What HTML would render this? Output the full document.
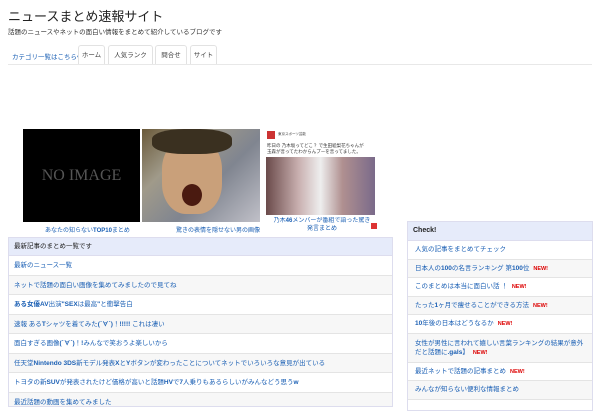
<!DOCTYPE html>
<html><head><meta charset="utf-8"><style>
*{margin:0;padding:0;box-sizing:border-box}
body{width:600px;height:400px;overflow:hidden;background:#fff;font-family:"Liberation Sans","Noto Sans CJK JP",sans-serif;position:relative;color:#333}
.a{position:absolute;white-space:nowrap}
a,.l{color:#1a5fb4;text-decoration:none}
.tab{position:absolute;top:45px;height:20px;border:1px solid #e2e2e2;border-bottom:none;border-radius:3px 3px 0 0;font-size:6.5px;line-height:19px;text-align:center;color:#444;background:#fff;white-space:nowrap;overflow:hidden}
.box{position:absolute;border:1px solid #dde;background:#fff;overflow:hidden}
.hd{background:#e6ebfa;font-size:7px;font-weight:bold;padding-left:5px;border-bottom:1px solid #dde;color:#222}
.r{font-size:6.5px;border-bottom:1px solid #e4e4e4;padding-left:5px;color:#1a5fb4;white-space:nowrap;overflow:hidden}
.n{color:#d00;font-weight:bold;font-size:5.5px;margin-left:4px}
b{font-weight:bold}
</style></head><body>
<div class="a" style="left:8px;top:6px;font-size:13px;color:#222">ニュースまとめ速報サイト</div>
<div class="a" style="left:8px;top:26px;font-size:6.5px;color:#333">話題のニュースやネットの面白い情報をまとめて紹介しているブログです</div>
<div class="a" style="left:12px;top:51px;font-size:6.5px;color:#1a5fb4">カテゴリ一覧はこちら▾</div>
<div class="tab" style="left:78px;width:27px">ホーム</div>
<div class="tab" style="left:108px;width:45px">人気ランク</div>
<div class="tab" style="left:155px;width:32px">問合せ</div>
<div class="tab" style="left:190px;width:27px">サイト</div>
<div class="a" style="left:8px;top:64px;width:584px;height:1px;background:#e8e8e8"></div>

<div class="a" style="left:23px;top:129px;width:117px;height:93px;background:#000;color:#555;font-family:'Liberation Serif',serif;font-size:16px;line-height:93px;text-align:center">NO IMAGE</div>
<div class="a" style="left:142px;top:129px;width:118px;height:93px;background:linear-gradient(135deg,#6a5a3a 0%,#a09a8a 30%,#808590 60%,#c0c0c8 100%);overflow:hidden">
<div style="position:absolute;left:20px;top:10px;width:60px;height:75px;border-radius:40%;background:#c9a07a"></div>
<div style="position:absolute;left:10px;top:0;width:80px;height:25px;background:#3a3020;border-radius:40%"></div>
<div style="position:absolute;left:40px;top:55px;width:20px;height:22px;background:#4a1a10;border-radius:50%"></div></div>
<div class="a" style="left:265px;top:129px;width:112px;height:88px;background:#fff;overflow:hidden">
<div style="position:absolute;left:2px;top:2px;width:8px;height:8px;background:#c33"></div>
<div style="position:absolute;left:13px;top:3px;font-size:3.5px;color:#444">東京スポーツ芸能</div>
<div style="position:absolute;left:2px;top:14px;font-size:4.5px;color:#333;line-height:6px">昨日の 乃木坂ってどこ？ で生田絵梨花ちゃんが<br>玉森が言ってたわからんプーを言ってました。</div>
<div style="position:absolute;left:1px;top:28px;width:109px;height:58px;background:linear-gradient(90deg,#6a4a4a,#c9b0b0 30%,#eee 50%,#b09090 70%,#7a6a8a)"></div></div>
<div class="a l" style="left:45px;top:225px;font-size:6px">あなたの知らない<b>TOP10</b>まとめ</div>
<div class="a l" style="left:176px;top:225px;font-size:6px">驚きの表情を隠せない男の画像</div>
<div class="a l" style="left:266px;top:217px;font-size:6px;text-align:center;width:112px;white-space:normal;line-height:8px;height:16px;overflow:hidden">乃木<b>46</b>メンバーが番組で語った驚き<br>発言まとめ</div>
<div class="a" style="left:371px;top:223px;width:6px;height:6px;background:#d33"></div>

<div class="box" style="left:8px;top:237px;width:385px;height:170px">
<div class="hd" style="height:18px;line-height:17px;font-weight:normal;font-size:6.5px">最新記事のまとめ一覧です</div>
<div class="r" style="height:19.5px;line-height:19px;background:#fff">最新のニュース一覧</div>
<div class="r" style="height:19.5px;line-height:19px;background:#f7f7f7">ネットで話題の面白い画像を集めてみましたので見てね</div>
<div class="r" style="height:19.5px;line-height:19px;background:#fff"><b>ある女優</b><b>AV</b>出演<b>"SEX</b>は最高<b>"</b>と衝撃告白</div>
<div class="r" style="height:19.5px;line-height:19px;background:#f7f7f7">速報 ある<b>T</b>シャツを着てみた<b>(´∀`)</b>！<b>!!!!!</b> これは凄い</div>
<div class="r" style="height:19.5px;line-height:19px;background:#fff">面白すぎる画像<b>(´∀`)</b>！<b>!</b>みんなで笑おうよ楽しいから</div>
<div class="r" style="height:19.5px;line-height:19px;background:#f7f7f7">任天堂<b>Nintendo 3DS</b>新モデル発表<b>X</b>と<b>Y</b>ボタンが変わったことについてネットでいろいろな意見が出ている</div>
<div class="r" style="height:19.5px;line-height:19px;background:#fff">トヨタの新<b>SUV</b>が発表されたけど価格が高いと話題<b>HV</b>で<b>7</b>人乗りもあるらしいがみんなどう思う<b>w</b></div>
<div class="r" style="height:19.5px;line-height:19px;background:#f7f7f7">最近話題の動画を集めてみました</div>
</div>

<div class="box" style="left:407px;top:221px;width:186px;height:190px">
<div class="hd" style="height:19px;line-height:18px">Check!</div>
<div class="r" style="height:18.5px;line-height:18px;padding-left:7px;background:#fff">人気の記事をまとめてチェック</div>
<div class="r" style="height:18.5px;line-height:18px;padding-left:7px;background:#f7f7f7">日本人の<b>100</b>の名言ランキング 第<b>100</b>位<span class="n">NEW!</span></div>
<div class="r" style="height:18.5px;line-height:18px;padding-left:7px;background:#fff">このまとめは本当に面白い話 ！<span class="n">NEW!</span></div>
<div class="r" style="height:18.5px;line-height:18px;padding-left:7px;background:#f7f7f7">たった<b>1</b>ヶ月で痩せることができる方法<span class="n">NEW!</span></div>
<div class="r" style="height:18.5px;line-height:18px;padding-left:7px;background:#fff"><b>10</b>年後の日本はどうなるか<span class="n">NEW!</span></div>
<div class="r" style="height:29px;line-height:9.5px;padding:5px 4px 0 7px;white-space:normal;background:#f7f7f7">女性が男性に言われて嬉しい言葉ランキングの結果が意外だと話題に<b>.gals</b>】<span class="n">NEW!</span></div>
<div class="r" style="height:18.5px;line-height:18px;padding-left:7px;background:#fff">最近ネットで話題の記事まとめ<span class="n">NEW!</span></div>
<div class="r" style="height:18.5px;line-height:18px;padding-left:7px;background:#f7f7f7">みんなが知らない便利な情報まとめ</div>
</div>
</body></html>
